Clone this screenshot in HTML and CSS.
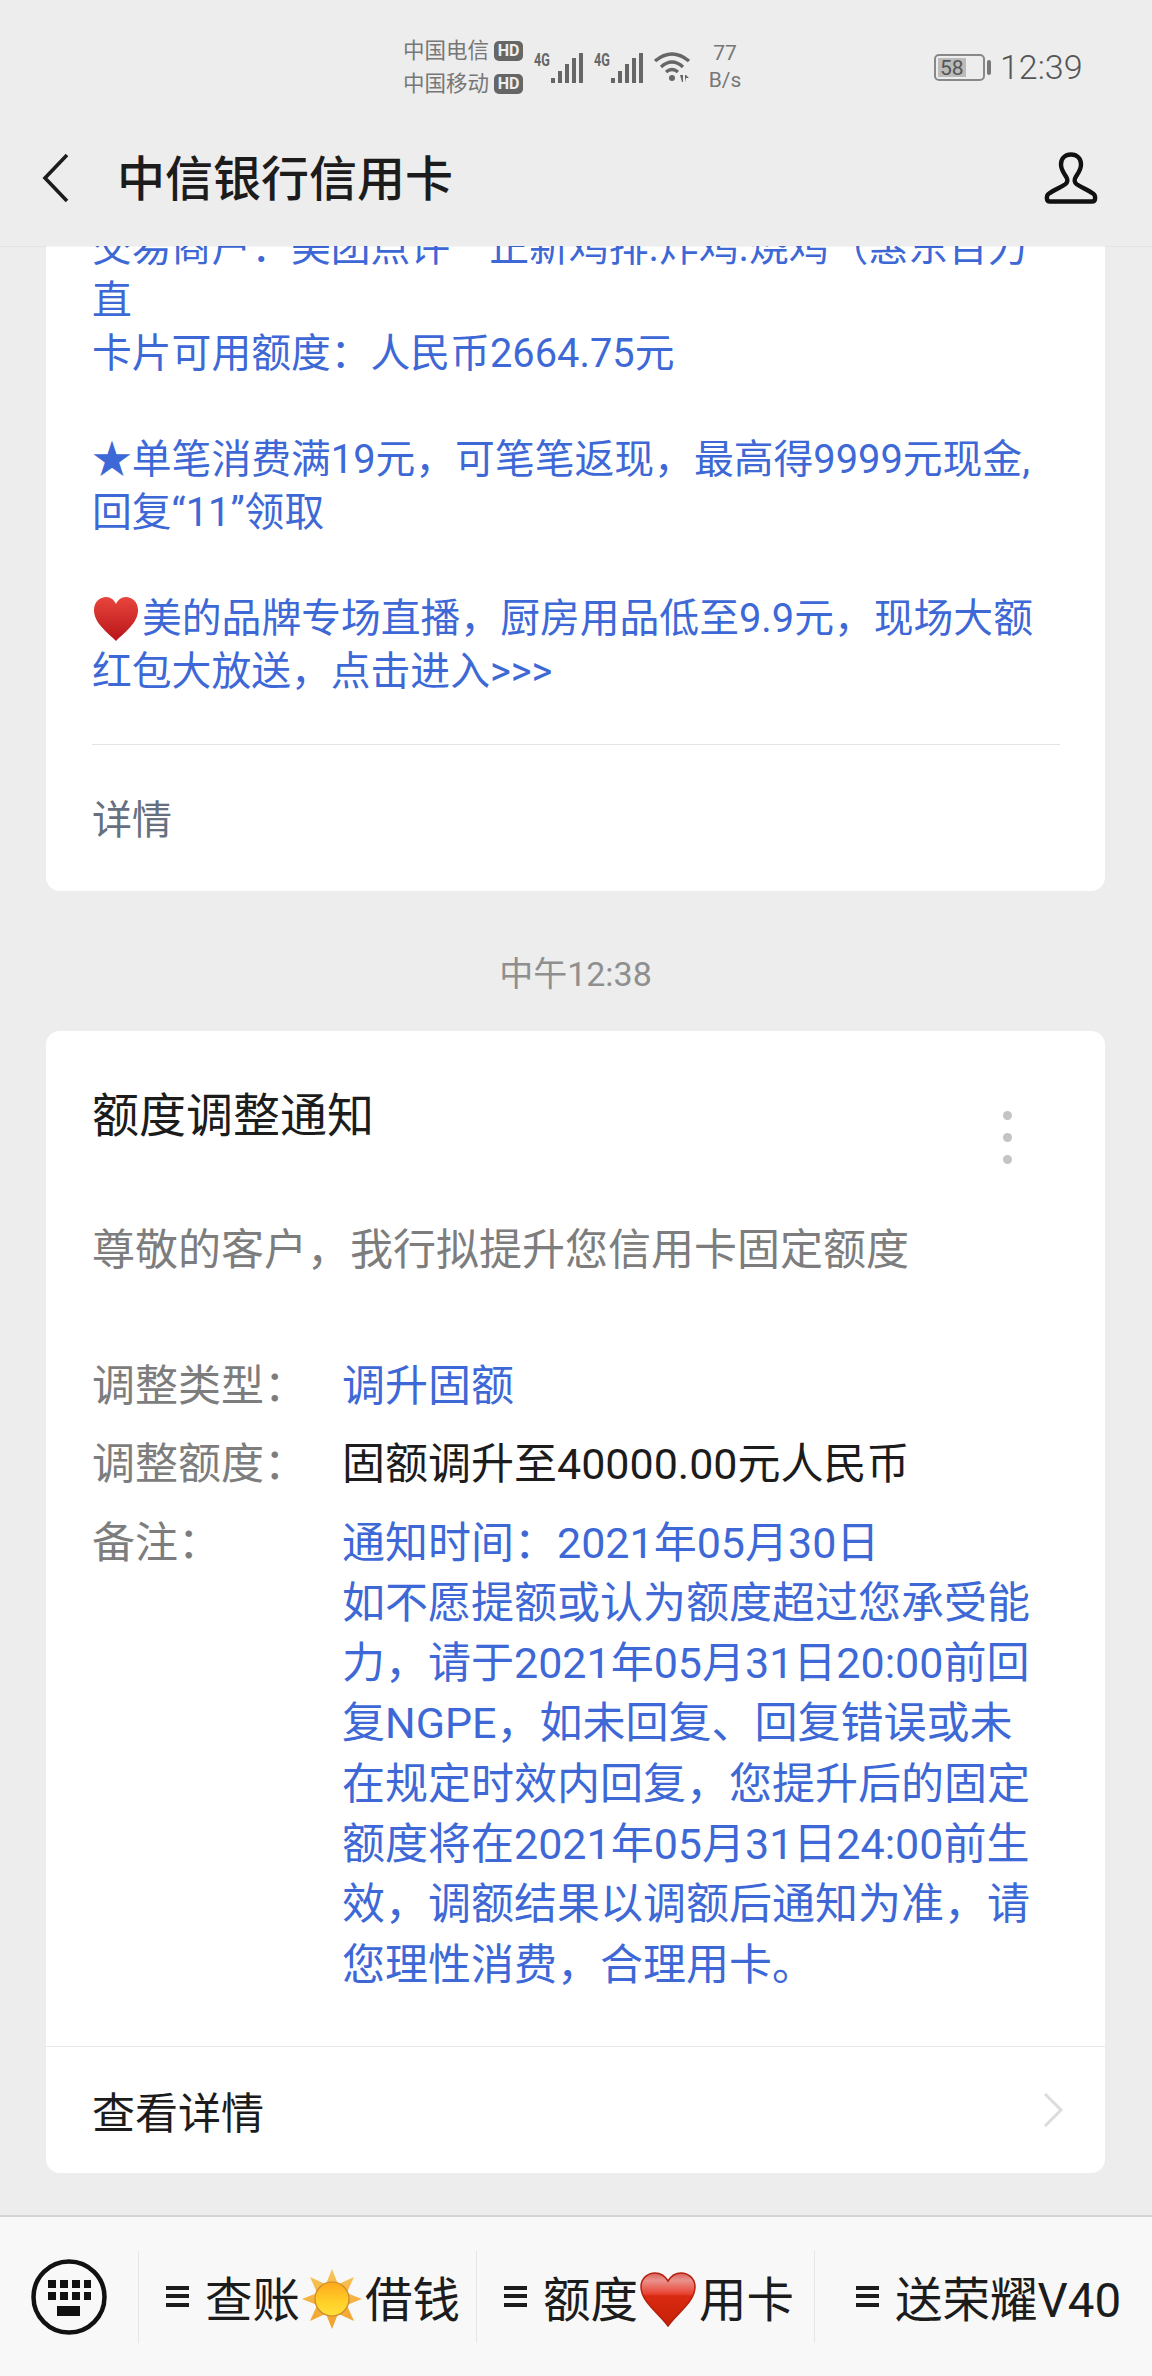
FILE: index.html
```html
<!DOCTYPE html>
<html lang="zh-CN">

<head>
    <meta charset="UTF-8">
    <meta name="viewport" content="width=device-width, initial-scale=1.0">
    <title>中信银行信用卡</title>
    <link rel="stylesheet" href="styles.css">
</head>

<body>
    <div class="phone">
        <!-- status bar -->
        <div class="status">
            <div class="carriers">
                <div class="carrier">中国电信<span class="hd">HD</span></div>
                <div class="carrier">中国移动<span class="hd">HD</span></div>
            </div>
            <div class="signal">
                <span class="net">4G</span>
                <svg width="33" height="30" viewBox="0 0 33 30"><path d="M0 25h4v5H0zM7 18h4v12H7zM14 11h4v19h-4zM21 5h4v25h-4zM28 0h4v30h-4z" fill="#666"/></svg>
            </div>
            <div class="signal">
                <span class="net">4G</span>
                <svg width="33" height="30" viewBox="0 0 33 30"><path d="M0 25h4v5H0zM7 18h4v12H7zM14 11h4v19h-4zM21 5h4v25h-4zM28 0h4v30h-4z" fill="#666"/></svg>
            </div>
            <svg class="wifi" width="38" height="32" viewBox="0 0 38 32"><path d="M2 10Q19-4 36 10M8 16Q19 6 30 16M13 21q6-5 12 0" fill="none" stroke="#666" stroke-width="3.4"/><circle cx="19" cy="27" r="3" fill="#666"/><path d="M27 24h3v7h-1zM32 31v-7h1l3 3h-3z" fill="#666"/></svg>
            <div class="speed">77<br>B/s</div>
            <div class="battery"><span class="battery-fill"></span><span class="battery-num">58</span></div>
            <span class="battery-cap"></span>
            <div class="clock">12:39</div>
        </div>

        <!-- title bar -->
        <div class="navbar">
            <svg class="back" width="30" height="50" viewBox="0 0 30 50"><path d="M26 2 4 25l22 23" fill="none" stroke="#1c1c1c" stroke-width="3.6"/></svg>
            <div class="nav-title">中信银行信用卡</div>
            <svg class="person" width="56" height="54" viewBox="0 0 56 54"><path d="M28 3.5c-6 0-10 4-10 10 0 5 3 9 5 12 2 3 2 6-1 8-4 2.500-12 6-16 9-3 2-3 8 1 8h42c4 0 4-6 1-8-4-3-12-6.500-16-9-3-2-3-5-1-8 2-3 5-7 5-12 0-6-4-10-10-10z" fill="none" stroke="#111" stroke-width="4.4"/></svg>
        </div>

        <!-- messages -->
        <div class="chat">
            <div class="card card-first">
                <div class="card-text">
                    交易商户：美团点评<span class="dash">—</span>正新鸡排.炸鸡.烧鸡（惠东百力<br>直<br>
                    卡片可用额度：人民币2664.75元<br><br>
                    ★单笔消费满19元，可笔笔返现，最高得9999元现金,<br>
                    回复“11”领取<br><br>
                    <svg class="emoji-inline" width="46" height="44" viewBox="0 0 46 44"><defs><linearGradient id="h1" x1="0" y1="0" x2="0" y2="1"><stop offset="0" stop-color="#e8453c"/><stop offset="1" stop-color="#b8141a"/></linearGradient></defs><path d="M23 44C14 35 1 26 1 13 1 5 7 0 13 0c5 0 8 3 10 7 2-4 5-7 10-7 6 0 12 5 12 13 0 13-13 22-22 31z" fill="url(#h1)"/></svg>美的品牌专场直播，厨房用品低至9.9元，现场大额<br>
                    红包大放送，点击进入&gt;&gt;&gt;
                </div>
                <div class="card-link">详情</div>
            </div>

            <div class="time">中午12:38</div>

            <div class="card">
                <div class="notice-head">
                    <div class="notice-title">额度调整通知</div>
                    <div class="dots"><span></span><span></span><span></span></div>
                </div>
                <div class="notice-desc">尊敬的客户，我行拟提升您信用卡固定额度</div>
                <div class="fields">
                    <div class="field-label">调整类型：</div>
                    <div class="field-value">调升固额</div>
                    <div class="field-label">调整额度：</div>
                    <div class="field-value dark">固额调升至40000.00元人民币</div>
                    <div class="field-label">备注：</div>
                    <div class="field-value">通知时间：2021年05月30日<br>如不愿提额或认为额度超过您承受能力，请于2021年05月31日20:00前回复NGPE，如未回复、回复错误或未在规定时效内回复，您提升后的固定额度将在2021年05月31日24:00前生效，调额结果以调额后通知为准，请您理性消费，合理用卡。</div>
                </div>
                <div class="more">
                    <span>查看详情</span>
                    <svg width="22" height="36" viewBox="0 0 22 36"><path d="M3 2l16 16L3 34" fill="none" stroke="#dcdcdc" stroke-width="3"/></svg>
                </div>
            </div>
        </div>

        <!-- bottom menu -->
        <div class="menu">
            <div class="keyboard">
                <svg width="76" height="76" viewBox="0 0 76 76"><circle cx="38" cy="38" r="35.5" fill="none" stroke="#111" stroke-width="4.5"/><path d="M17 21h8v8h-8zM29 21h8v8h-8zM41 21h8v8h-8zM53 21h7v8h-7zM17 33h8v8h-8zM29 33h8v8h-8zM41 33h8v8h-8zM53 33h7v8h-7zM26 47h23v10H26z" fill="#111"/></svg>
            </div>
            <div class="menu-item">
                <span class="lines"></span>查账<svg class="sun" width="62" height="62" viewBox="0 0 62 62"><defs><linearGradient id="s1" x1="0" y1="0" x2="0" y2="1"><stop offset="0" stop-color="#ffa81c"/><stop offset="0.6" stop-color="#ffd028"/><stop offset="1" stop-color="#ffe03a"/></linearGradient><linearGradient id="s2" x1="0" y1="0" x2="0" y2="1"><stop offset="0" stop-color="#f7c65a"/><stop offset="1" stop-color="#f3a02a"/></linearGradient></defs><path d="M31 0 37.100 15.200 53 8 45.800 23.900 61 30 45.800 36.100 53 52 37.100 44.800 31 60 24.900 44.800 9 52 16.200 36.100 1 30 16.200 23.900 9 8 24.900 15.200z" fill="url(#s2)"/><circle cx="31" cy="30" r="17" fill="url(#s1)" stroke="#c98a2a" stroke-width="1.200"/></svg>借钱
            </div>
            <div class="menu-item">
                <span class="lines"></span>额度<svg class="heart" width="56" height="56" viewBox="0 0 56 56"><defs><linearGradient id="h2" x1="0" y1="0" x2="0" y2="1"><stop offset="0" stop-color="#d9605a"/><stop offset="0.14" stop-color="#ea928c"/><stop offset="0.4" stop-color="#e8402f"/><stop offset="0.43" stop-color="#d82a10"/><stop offset="1" stop-color="#c92007"/></linearGradient></defs><path d="M28 54C20 42 1 30 1 15 1 6 8 1 15 1c6 0 10 3 13 8 3-5 7-8 13-8 7 0 14 5 14 14 0 15-19 27-27 39z" fill="url(#h2)" stroke="#b5200f" stroke-width="1.500"/></svg>用卡
            </div>
            <div class="menu-item menu-item-last">
                <span class="lines"></span>送荣耀V40
            </div>
        </div>
    </div>
</body>

</html>
```

FILE: styles.css
```css
/* page */
body {
    margin: 0;
    background-color: #ededed;
    font-family: Roboto, "Noto Sans CJK SC", sans-serif;
}

.phone {
    width: 1152px;
    height: 2376px;
    display: flex;
    flex-direction: column;
    overflow: hidden;
}

/* status bar */
.status {
    height: 110px;
    flex: none;
    display: flex;
    align-items: center;
    padding: 24px 0 0 403px;
    box-sizing: border-box;
    color: #666;
}

.carriers {
    width: 131px;
    flex: none;
}

.carrier {
    display: flex;
    align-items: center;
    font-size: 21.5px;
    line-height: 33px;
    color: #777;
}

.hd {
    margin-left: 5px;
    width: 29px;
    height: 20px;
    border-radius: 5px;
    background-color: #666;
    color: #eee;
    font-size: 16px;
    font-weight: 700;
    line-height: 20px;
    text-align: center;
}

.signal {
    display: flex;
    align-items: flex-end;
    width: 60px;
    height: 32px;
}

.net {
    width: 17px;
    align-self: flex-start;
    font-size: 18px;
    font-weight: 700;
    line-height: 18px;
    transform: scaleX(0.7);
    transform-origin: left;
}

.wifi {
    margin-left: -1px;
}

.speed {
    width: 52px;
    margin-left: 8px;
    font-size: 21px;
    line-height: 27px;
    text-align: center;
    color: #777;
}

.battery {
    margin-left: 183px;
    width: 51px;
    height: 27px;
    display: flex;
    border: 2px solid #888;
    border-radius: 5px;
    box-sizing: border-box;
    padding: 2px;
    overflow: hidden;
}

.battery-fill {
    width: 28px;
    background-color: #bbb;
}

.battery-num {
    margin-left: -26px;
    font-size: 21px;
    line-height: 20px;
    color: #555;
}

.battery-cap {
    width: 4px;
    height: 15px;
    margin-left: 2px;
    border-radius: 2px;
    background-color: #777;
}

.clock {
    margin-left: 9px;
    font-size: 34px;
    font-weight: 300;
    color: #555;
}

/* title bar */
.navbar {
    height: 136px;
    flex: none;
    display: flex;
    align-items: center;
    padding: 0 53px 0 41px;
    box-sizing: border-box;
    position: relative;
    z-index: 1;
    background-color: #ededed;
    box-shadow: 0 1px 1px rgba(0, 0, 0, 0.04);
}

.back {
    flex: none;
}

.nav-title {
    margin: 0 0 6px 46px;
    flex: 1;
    font-size: 48px;
    font-weight: 500;
    color: #1c1c1c;
}

/* messages */
.chat {
    flex: 1;
    min-height: 0;
    overflow: hidden;
    padding: 0 47px 0 46px;
}

.card {
    background-color: #fff;
    border-radius: 14px;
    overflow: hidden;
}

.card-first {
    margin-top: -25px;
    border-radius: 0 0 14px 14px;
}

.card-text {
    margin: 0 45px 0 46px;
    padding-bottom: 46px;
    border-bottom: 1px solid #e4e4e4;
    font-size: 39.8px;
    line-height: 53px;
    color: #3d68d6;
    white-space: nowrap;
}

.dash {
    margin: 0 4px;
    line-height: 0;
    vertical-align: 6px;
}

.emoji-inline {
    vertical-align: 5px;
    margin: -14px 3px -14px 1px;
}

.card-link {
    height: 146px;
    padding-left: 46px;
    font-size: 40px;
    line-height: 152px;
    color: #66707f;
}

.time {
    height: 140px;
    line-height: 166px;
    text-align: center;
    font-size: 34px;
    color: #8f8f8f;
}

/* notice card */
.notice-head {
    display: flex;
    justify-content: space-between;
    align-items: flex-start;
    padding: 55px 93px 0 46px;
}

.notice-title {
    font-size: 47px;
    line-height: 60px;
    color: #1c1c1c;
}

.dots {
    display: flex;
    flex-direction: column;
    gap: 13px;
    margin-top: 25px;
}

.dots span {
    width: 9px;
    height: 9px;
    border-radius: 50%;
    background-color: #c4c4c4;
}

.notice-desc {
    margin-top: 56px;
    padding-left: 46px;
    font-size: 43px;
    line-height: 60px;
    color: #7d7d7d;
}

.fields {
    display: grid;
    grid-template-columns: 250px 700px;
    row-gap: 18px;
    margin-top: 76px;
    padding-left: 46px;
    font-size: 43px;
    line-height: 60.3px;
}

.field-label {
    color: #7d7d7d;
}

.field-value {
    color: #3d68d6;
}

.field-value.dark {
    color: #1c1c1c;
}

.more {
    margin-top: 51px;
    height: 126px;
    display: flex;
    justify-content: space-between;
    align-items: center;
    padding: 0 41px 0 46px;
    border-top: 1px solid #e8e8e8;
    font-size: 43px;
    color: #1c1c1c;
}

/* bottom menu */
.menu {
    height: 161px;
    flex: none;
    display: flex;
    align-items: center;
    box-sizing: border-box;
    border-top: 2px solid #d4d4d4;
    background-color: #f8f8f8;
}

.keyboard {
    width: 138px;
    flex: none;
    display: flex;
    justify-content: center;
}

.menu-item {
    width: 338px;
    height: 92px;
    flex: none;
    display: flex;
    align-items: center;
    box-sizing: border-box;
    padding-left: 27px;
    border-left: 1px solid #e6e6e6;
    font-size: 47.5px;
    white-space: nowrap;
    color: #1c1c1c;
}

.menu-item-last {
    padding-left: 41px;
}

.lines {
    width: 23px;
    height: 21px;
    margin-right: 16px;
    flex: none;
    background: linear-gradient(#1c1c1c 0 4px, transparent 4px 8px, #1c1c1c 8px 12px, transparent 12px 17px, #1c1c1c 17px 21px);
}

.sun {
    flex: none;
    margin: 6px 2px 0 1px;
}

.heart {
    flex: none;
    margin: 6px 3px 0 2px;
}
```
